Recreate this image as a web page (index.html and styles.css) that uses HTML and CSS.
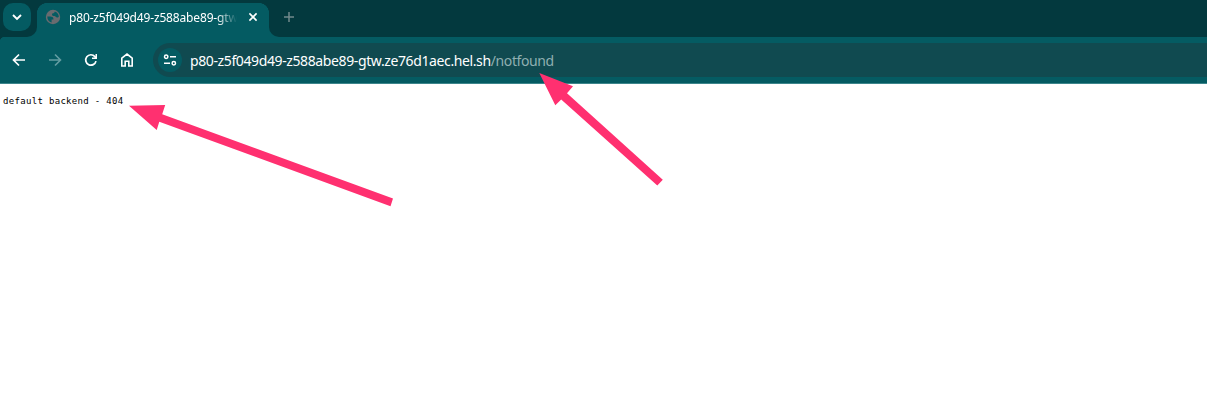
FILE: index.html
```html
<!DOCTYPE html>
<html lang="en">
<head>
<meta charset="utf-8">
<title>p80-z5f049d49-z588abe89-gtw.ze76d1aec.hel.sh/notfound</title>
<link rel="stylesheet" href="styles.css">
</head>
<body>
<div class="browser">
  <header class="tabstrip">
    <div class="tab-search-area">
      <button class="tab-search" aria-label="Search tabs">
        <svg width="28" height="28" viewBox="0 0 28 28"><path d="M10 12l4 4 4-4" fill="none" stroke="#fff" stroke-width="1.9"/></svg>
      </button>
    </div>
    <div class="tab">
      <svg class="globe" width="16" height="16" viewBox="0 0 16 16">
        <circle cx="8" cy="8" r="7.2" fill="#696b6f"/>
        <path d="M2.3 7.4H5.2C7.2 7.4 8.4 8.2 8.4 9.6V10.4H6.6V13.4C4 12.8 2.2 10.5 2.3 7.4ZM9.8 2.5C12.2 3.2 13.7 5.2 13.8 7.6C13.7 8.3 13 8.6 12.2 8.6C10.8 8.6 10.6 7 9.4 7C8.2 7 7 6.6 7 5.4C7 4 9.8 4.4 9.8 2.5Z" fill="#045b62"/>
      </svg>
      <span class="title">p80-z5f049d49-z588abe89-gtw.</span>
      <svg class="close" width="10" height="10" viewBox="0 0 10 10"><path d="M1.4 1.4l7.2 7.2M8.6 1.4L1.4 8.6" stroke="#fff" stroke-width="1.6"/></svg>
    </div>
    <div class="new-tab-area">
      <svg width="12" height="12" viewBox="0 0 12 12"><path d="M6 1v10M1 6h10" stroke="#71898c" stroke-width="1.5"/></svg>
    </div>
  </header>
  <nav class="toolbar">
    <svg class="nav-icon" width="16" height="16" viewBox="0 0 16 16"><path d="M14 8H3M8 2.5L2.5 8 8 13.5" fill="none" stroke="#fff" stroke-width="1.7"/></svg>
    <svg class="nav-icon" width="16" height="16" viewBox="0 0 16 16"><path d="M2 8h11M8 2.5L13.5 8 8 13.5" fill="none" stroke="#639da1" stroke-width="1.6"/></svg>
    <svg class="nav-icon" width="16" height="16" viewBox="0 0 16 16"><path d="M13 9.1A5.2 5.2 0 1 1 11.9 4.6L13 5.9" fill="none" stroke="#fff" stroke-width="1.7"/><path d="M14 2v5H9V5.5h3.5V2z" fill="#fff"/></svg>
    <svg class="nav-icon" width="16" height="16" viewBox="0 0 16 16"><path d="M2.8 14V6.2L8 2.1l5.2 4.1V14H9.8V9.3H6.2V14z" fill="none" stroke="#fff" stroke-width="1.6"/></svg>
    <div class="omnibox">
      <span class="site-info">
        <svg width="14" height="14" viewBox="0 0 14 14"><g fill="none" stroke="#fff" stroke-width="1.5"><circle cx="3.2" cy="3.8" r="1.7"/><path d="M7 3.8h6M1 10.3h6"/><circle cx="10.8" cy="10.3" r="1.7"/></g></svg>
      </span>
      <span class="url"><span class="host">p80-z5f049d49-z588abe89-gtw.ze76d1aec.hel.sh</span><span class="path">/notfound</span></span>
    </div>
  </nav>
  <main class="page"><pre class="response">default backend - 404</pre></main>
  <svg class="arrows" width="1207" height="405" viewBox="0 0 1207 405">
    <path d="M129 105.7L165.2 105 162.2 114.3 393 198.6 390.5 206.2 159.3 121.8 156.7 130Z"/>
    <path d="M539.3 73L573 86.3 567 93.3 662.8 179.8 657.3 185.6 561.2 99.5 555.3 105.3Z"/>
  </svg>
</div>
</body>
</html>
```
FILE: styles.css
```css
* { box-sizing: border-box; }
body { margin: 0; background: #fff; }
.browser {
  position: relative;
  width: 1207px;
  height: 405px;
  overflow: hidden;
  display: flex;
  flex-direction: column;
  font-family: "Noto Sans", "Open Sans", sans-serif;
}
.tabstrip {
  height: 37px;
  flex: none;
  display: flex;
  background: linear-gradient(to bottom, #03393e 3px, #045b62 3px);
}
.tab-search-area {
  width: 37px;
  padding: 3px;
  background: #03393e;
  border-bottom-right-radius: 10px;
}
.tab-search {
  display: block;
  width: 28px;
  height: 28px;
  padding: 0;
  border: 0;
  border-radius: 10px;
  background: #045b62;
}
.tab-search svg { display: block; }
.tab {
  width: 232px;
  height: 34px;
  margin-top: 3px;
  padding: 0 11px 6px 8px;
  display: flex;
  align-items: center;
  background: radial-gradient(circle at 10px 10px, #045b62 9.7px, #03393e 10.2px) 0 0 / 10px 10px no-repeat,
    radial-gradient(circle at 0 10px, #045b62 9.7px, #03393e 10.2px) 100% 0 / 10px 10px no-repeat,
    #045b62;
}
.globe { flex: none; }
.title {
  width: 168px;
  margin-left: 8px;
  padding-top: 2px;
  white-space: nowrap;
  font-size: 12px;
  line-height: 20px;
  letter-spacing: -0.16px;
  color: #fff;
  -webkit-mask-image: linear-gradient(to right, #000 148px, transparent 168px);
  mask-image: linear-gradient(to right, #000 148px, transparent 168px);
}
.close { margin-left: auto; }
.new-tab-area {
  flex: 1;
  padding: 11px 0 0 14px;
  background: #03393e;
  border-bottom-left-radius: 10px;
}
.new-tab-area svg { display: block; }
.toolbar {
  height: 47px;
  flex: none;
  padding: 6px 0 6px 11px;
  display: flex;
  align-items: center;
  gap: 20px;
  background: radial-gradient(circle at 5px 5px, #045b62 5px, #03393e 5.5px) 0 0 / 5px 5px no-repeat,
    #045b62;
  border-bottom: 1px solid #3c858b;
}
.nav-icon { flex: none; }
.omnibox {
  flex: 1;
  height: 34px;
  margin-left: -2px;
  padding-left: 5px;
  display: flex;
  align-items: center;
  background: #104a50;
  border-radius: 17px 0 0 17px;
}
.site-info {
  width: 24px;
  height: 24px;
  flex: none;
  display: flex;
  align-items: center;
  justify-content: center;
  border-radius: 50%;
  background: #045b62;
}
.url {
  margin-left: 8px;
  padding-top: 1px;
  font-size: 14px;
  line-height: 20px;
  letter-spacing: -0.385px;
  white-space: nowrap;
}
.host { color: #fff; }
.path { color: #8fafb1; }
.page { flex: 1; padding: 11px 3px; background: #fff; }
.response {
  margin: 0;
  font: 9px/12px "DejaVu Sans Mono", monospace;
  letter-spacing: 0.32px;
  color: #000;
}
.arrows {
  position: absolute;
  inset: 0;
  fill: #ff3070;
  pointer-events: none;
}
```
